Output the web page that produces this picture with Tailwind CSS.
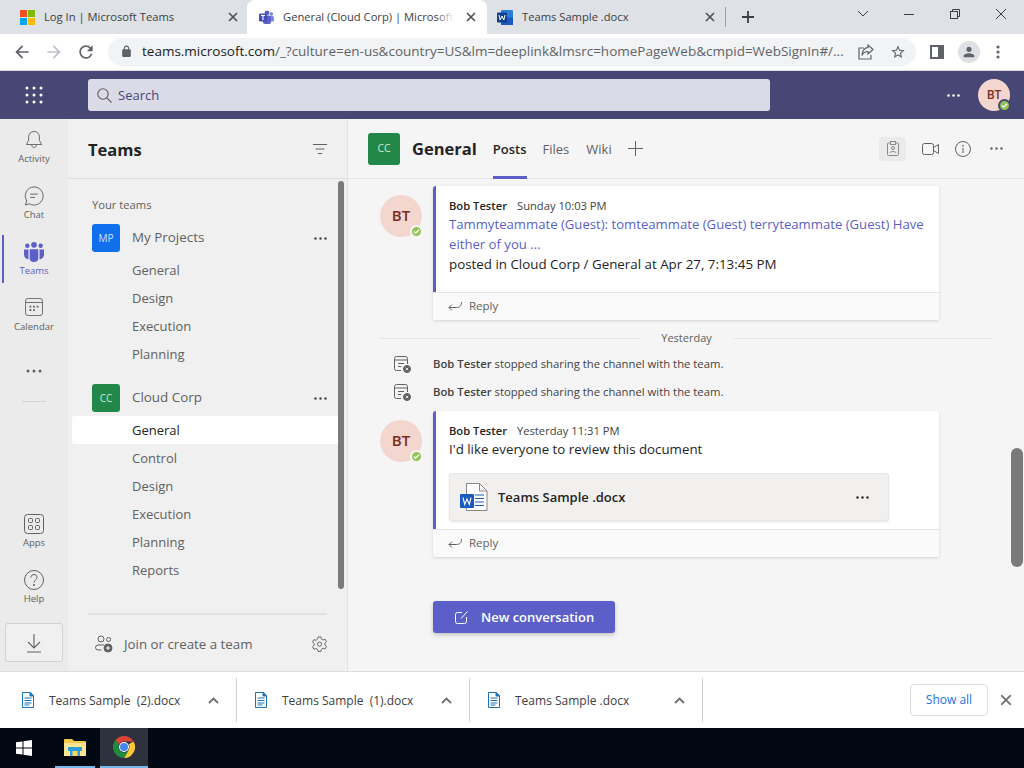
<!DOCTYPE html>
<html lang="en">
<head>
  <meta charset="UTF-8" />
  <title>General (Cloud Corp) | Microsoft Teams</title>
  <script src="https://cdn.jsdelivr.net/npm/@tailwindcss/browser@4"></script>
</head>
<body class="w-[1024px] h-[768px] overflow-hidden flex flex-col font-['Open_Sans',sans-serif] bg-white">

  <!-- Tab strip -->
  <div class="h-[34px] shrink-0 bg-[#dee1e6] flex items-stretch text-[11.2px] text-[#3c4043]">
    <div class="w-[247px] flex items-center pl-[20px] pr-[9px]">
      <svg class="w-[15px] h-[15px] shrink-0" viewBox="0 0 15 15"><rect width="7" height="7" fill="#f25022"/><rect x="8" width="7" height="7" fill="#7fba00"/><rect y="8" width="7" height="7" fill="#00a4ef"/><rect x="8" y="8" width="7" height="7" fill="#ffb900"/></svg>
      <span class="ml-[9px] flex-1 whitespace-nowrap">Log In | Microsoft Teams</span>
      <svg class="w-[10px] h-[10px]" viewBox="0 0 10 10" stroke="#4a4d52" stroke-width="1.6"><path d="M1 1l8 8M9 1l-8 8"/></svg>
    </div>
    <div class="w-[240px] bg-white rounded-t-[8px] flex items-center pl-[12px] pr-[11px]">
      <svg class="w-[15px] h-[15px] shrink-0" viewBox="0 0 15 15"><circle cx="12.3" cy="4" r="1.8" fill="#7b83eb"/><rect x="9" y="6" width="6" height="5.5" rx="1.5" fill="#7b83eb"/><circle cx="8" cy="2.8" r="2.4" fill="#5b5fc7"/><rect x="4" y="5.5" width="8" height="8.5" rx="2" fill="#5b5fc7"/><rect y="3.5" width="8" height="8" rx="1" fill="#464eb8"/><path d="M2 5.5h4M4 5.5v4.5" stroke="#fff" stroke-width="1.1"/></svg>
      <span class="ml-[9px] flex-1 whitespace-nowrap relative">General (Cloud Corp) | Microsoft<span class="absolute right-[12px] top-0 bottom-0 w-[18px] bg-linear-to-r from-transparent to-white"></span></span>
      <svg class="w-[10px] h-[10px] shrink-0" viewBox="0 0 10 10" stroke="#4a4d52" stroke-width="1.6"><path d="M1 1l8 8M9 1l-8 8"/></svg>
    </div>
    <div class="w-[238px] flex items-center pl-[10px] pr-[10px]">
      <svg class="w-[16px] h-[15px] shrink-0" viewBox="0 0 16 15"><rect x="4" y="0" width="12" height="15" rx="1" fill="#2b7cd3"/><rect x="4" y="7.5" width="12" height="7.5" fill="#185abd"/><rect y="2.5" width="10" height="10" rx="1" fill="#103f91"/><path d="M2 5l1.2 5 1.8-4 1.8 4L8 5" fill="none" stroke="#fff" stroke-width="1"/></svg>
      <span class="ml-[9px] flex-1 whitespace-nowrap">Teams Sample .docx</span>
      <svg class="w-[10px] h-[10px]" viewBox="0 0 10 10" stroke="#4a4d52" stroke-width="1.6"><path d="M1 1l8 8M9 1l-8 8"/></svg>
    </div>
    <div class="w-px h-[20px] mt-[7px] bg-[#9aa0a6]"></div>
    <div class="flex items-center pl-[16px] w-[128px]">
      <svg class="w-[12px] h-[12px]" viewBox="0 0 12 12" stroke="#3c4043" stroke-width="1.8"><path d="M6 0v12M0 6h12"/></svg>
    </div>
    <div class="flex-1 flex items-center pb-[6px] pl-[4px]">
      <svg class="w-[10px] h-[6px]" viewBox="0 0 10 6" fill="none" stroke="#3c4043"><path d="M0 0l5 5 5-5"/></svg>
      <svg class="ml-[36px] w-[10px] h-[1px]" viewBox="0 0 10 1" stroke="#3c4043"><path d="M0 .5h10"/></svg>
      <svg class="ml-[36px] w-[10px] h-[10px]" viewBox="0 0 10 10" fill="none" stroke="#3c4043"><rect x=".5" y="2.5" width="7" height="7"/><path d="M2.5 2.5v-2h7v7h-2"/></svg>
      <svg class="ml-[36px] w-[10px] h-[10px]" viewBox="0 0 10 10" stroke="#3c4043"><path d="M0 0l10 10M10 0L0 10"/></svg>
    </div>
  </div>

  <!-- Toolbar -->
  <div class="h-[37px] shrink-0 bg-white flex items-center border-b border-[#dadce0] pb-[1px] text-[#5f6368]">
    <div class="w-[108px] flex items-center pl-[12px] gap-[12px]">
      <svg class="w-[20px] h-[20px]" viewBox="0 0 24 24" fill="#5f6368"><path d="M20 11H7.83l5.59-5.59L12 4l-8 8 8 8 1.41-1.41L7.83 13H20v-2z"/></svg>
      <svg class="w-[20px] h-[20px]" viewBox="0 0 24 24" fill="#bdc1c6"><path d="M12 4l-1.41 1.41L16.17 11H4v2h12.17l-5.58 5.59L12 20l8-8z"/></svg>
      <svg class="w-[20px] h-[20px]" viewBox="0 0 24 24" fill="#5f6368"><path d="M17.65 6.35A7.958 7.958 0 0012 4c-4.42 0-7.99 3.58-7.99 8s3.57 8 7.99 8c3.73 0 6.84-2.55 7.73-6h-2.08A5.99 5.99 0 0112 18c-3.31 0-6-2.69-6-6s2.69-6 6-6c1.66 0 3.14.69 4.22 1.78L13 11h7V4l-2.35 2.35z"/></svg>
    </div>
    <div class="w-[808px] h-[28px] bg-[#f1f3f4] rounded-full flex items-center pl-[12px] pr-[10px]">
      <svg class="w-[13px] h-[13px] shrink-0" viewBox="0 0 24 24" fill="#5f6368"><path d="M18 8h-1V6c0-2.76-2.24-5-5-5S7 3.24 7 6v2H6c-1.1 0-2 .9-2 2v10c0 1.1.9 2 2 2h12c1.1 0 2-.9 2-2V10c0-1.1-.9-2-2-2zM9 6c0-1.66 1.34-3 3-3s3 1.34 3 3v2H9V6z"/></svg>
      <span class="ml-[9px] flex-1 text-[13.5px] whitespace-nowrap text-[#5f6368]"><span class="text-[#202124]">teams.microsoft.com</span>/_?culture=en-us&amp;country=US&amp;lm=deeplink&amp;lmsrc=homePageWeb&amp;cmpid=WebSignIn#/...</span>
      <svg class="w-[16px] h-[16px] ml-[12px] shrink-0" viewBox="0 0 16 16" fill="none" stroke="#5f6368" stroke-width="1.2"><path d="M6 4H1v11h12v-4"/><path d="M10 1l5 4.500L10 10V7.500C7 7.500 5 9 4 11.500 4 7 6.500 3.500 10 3.300z"/></svg>
      <svg class="w-[16px] h-[16px] ml-[16px] shrink-0" viewBox="0 0 24 24" fill="#5f6368"><path d="M22 9.240l-7.190-.62L12 2 9.190 8.630 2 9.240l5.460 4.730L5.820 21 12 17.270 18.180 21l-1.630-7.030L22 9.240zM12 15.400l-3.760 2.270 1-4.280-3.320-2.880 4.380-.38L12 6.100l1.710 4.040 4.380.38-3.320 2.880 1 4.280L12 15.400z"/></svg>
    </div>
    <div class="flex-1 flex items-center pl-[14px]">
      <svg class="w-[14px] h-[14px]" viewBox="0 0 14 14"><path fill-rule="evenodd" d="M0 0h14v14H0zM2 2v10h6V2z" fill="#5f6368"/></svg>
      <div class="ml-[14px] w-[22px] h-[22px] rounded-full bg-[#dee1e6] flex items-center justify-center">
        <svg class="w-[16px] h-[16px]" viewBox="0 0 24 24" fill="#5f6368"><path d="M12 12c2.210 0 4-1.790 4-4s-1.790-4-4-4-4 1.790-4 4 1.790 4 4 4zm0 2c-2.670 0-8 1.340-8 4v2h16v-2c0-2.660-5.330-4-8-4z"/></svg>
      </div>
      <svg class="ml-[16px] w-[4px] h-[14px]" viewBox="0 0 4 14" fill="#5f6368"><circle cx="2" cy="2" r="1.600"/><circle cx="2" cy="7" r="1.600"/><circle cx="2" cy="12" r="1.600"/></svg>
    </div>
  </div>

  <!-- Teams header -->
  <div class="h-[48px] shrink-0 bg-[#464775] flex items-center">
    <div class="w-[88px] pl-[25px]">
      <svg class="w-[18px] h-[18px]" viewBox="0 0 18 18" fill="#fff"><circle cx="2" cy="2" r="1.500"/><circle cx="9" cy="2" r="1.500"/><circle cx="16" cy="2" r="1.500"/><circle cx="2" cy="9" r="1.500"/><circle cx="9" cy="9" r="1.500"/><circle cx="16" cy="9" r="1.500"/><circle cx="2" cy="16" r="1.500"/><circle cx="9" cy="16" r="1.500"/><circle cx="16" cy="16" r="1.500"/></svg>
    </div>
    <div class="w-[682px] h-[32px] bg-[#dbdae7] rounded-[3px] flex items-center pl-[9px]">
      <svg class="w-[15px] h-[15px]" viewBox="0 0 15 15" fill="none" stroke="#605e5c" stroke-width="1.100"><circle cx="6" cy="6" r="5.200"/><path d="M9.800 9.800L14.500 14.500"/></svg>
      <span class="ml-[6px] pt-[1px] text-[13px] text-[#464775]">Search</span>
    </div>
    <svg class="ml-[177px] w-[13px] h-[3px]" viewBox="0 0 13 3" fill="#fff"><circle cx="1.500" cy="1.500" r="1.300"/><circle cx="6.500" cy="1.500" r="1.300"/><circle cx="11.500" cy="1.500" r="1.300"/></svg>
    <div class="relative ml-[18px] w-[32px] h-[32px] rounded-full bg-[#f3d6cd] flex items-center justify-center text-[12px] text-[#7a2d1e] font-semibold">BT
      <span class="absolute right-[-1px] bottom-[-1px] w-[13px] h-[13px] rounded-full bg-[#92c353] border-[2px] border-[#464775] flex items-center justify-center">
        <svg class="w-[7px] h-[7px]" viewBox="0 0 8 8" fill="none" stroke="#fff" stroke-width="1.400"><path d="M1 4l2 2 4-4"/></svg>
      </span>
    </div>
  </div>

  <!-- App body -->
  <div class="h-[552px] shrink-0 flex overflow-hidden">

    <!-- Left rail -->
    <nav class="w-[68px] shrink-0 bg-[#ebebeb] flex flex-col items-center text-[9.5px] text-[#616161] relative">
      <div class="w-full h-[56px] pt-[11px] flex flex-col items-center">
        <svg class="w-[18px] h-[20px]" viewBox="0 0 20 21" fill="none" stroke="#616161"><path d="M10 1c-3.800 0-6 3-6 6v4l-2.500 4.500h17L16 11V7c0-3-2.200-6-6-6z"/><path d="M7.500 16c.2 2 1.200 3 2.500 3s2.300-1 2.500-3"/></svg>
        <span class="mt-[2px]">Activity</span>
      </div>
      <div class="w-full h-[56px] pt-[11px] flex flex-col items-center">
        <svg class="w-[20px] h-[20px]" viewBox="0 0 21 21" fill="none" stroke="#616161"><path d="M10.500 1a9.500 9.500 0 1 1-4.700 17.700L1.500 20l1.300-4.300A9.500 9.500 0 0 1 10.500 1z"/><path d="M6.500 8.500h8M6.500 12h5"/></svg>
        <span class="mt-[2px]">Chat</span>
      </div>
      <div class="w-full h-[56px] pt-[11px] flex flex-col items-center relative text-[#5b5fc7]">
        <span class="absolute left-[2px] top-[4px] w-[2px] h-[48px] bg-[#5b5fc7]"></span>
        <svg class="w-[20px] h-[20px]" viewBox="0 0 21 21" fill="#5b5fc7"><circle cx="10.500" cy="3" r="3"/><circle cx="3.500" cy="4" r="2.300"/><circle cx="17.500" cy="4" r="2.300"/><path d="M0 8h4.700v8.500c0 .7.100 1.200.3 1.700C2.300 18 0 16 0 13zM21 8h-4.700v8.500c0 .7-.1 1.200-.3 1.700 2.700-.2 5-2.200 5-5.200zM6 7.500h9v9.500a4.500 4 0 0 1-9 0z"/></svg>
        <span class="mt-[2px]">Teams</span>
      </div>
      <div class="w-full h-[56px] pt-[11px] flex flex-col items-center">
        <svg class="w-[18px] h-[18px]" viewBox="0 0 20 20" fill="none" stroke="#616161"><rect x=".5" y=".5" width="19" height="19" rx="3"/><path d="M.5 5h19"/><path stroke-width="2" stroke-dasharray="2 2" d="M5 9.500h10M5 13.500h6"/></svg>
        <span class="mt-[4px]">Calendar</span>
      </div>
      <svg class="mt-[26px] w-[16px] h-[4px]" viewBox="0 0 16 4" fill="#616161"><circle cx="2" cy="2" r="1.500"/><circle cx="8" cy="2" r="1.500"/><circle cx="14" cy="2" r="1.500"/></svg>
      <div class="mt-[28px] w-[24px] h-px bg-[#d6d6d6]"></div>
      <div class="mt-[112px] w-full h-[56px] flex flex-col items-center">
        <svg class="w-[20px] h-[20px]" viewBox="0 0 20 20" fill="none" stroke="#616161"><rect x=".5" y=".5" width="19" height="19" rx="3"/><rect x="4.500" y="4.500" width="4" height="4" rx="1"/><rect x="11.500" y="4.500" width="4" height="4" rx="1"/><rect x="4.500" y="11.500" width="4" height="4" rx="1"/><rect x="11.500" y="11.500" width="4" height="4" rx="1"/></svg>
        <span class="mt-[2px]">Apps</span>
      </div>
      <div class="w-full h-[53px] flex flex-col items-center">
        <svg class="w-[20px] h-[20px]" viewBox="0 0 20 20" fill="none" stroke="#616161"><circle cx="10" cy="10" r="9.500"/><path d="M7 7.500c0-2 1.500-3 3-3s3 1 3 3c0 2.500-3 2.500-3 5"/><circle cx="10" cy="15" r=".6" fill="#616161"/></svg>
        <span class="mt-[2px]">Help</span>
      </div>
      <div class="w-[58px] h-[39px] rounded-[3px] border border-[#d1d1d1] bg-[#f0f0f0] flex items-center justify-center">
        <svg class="w-[16px] h-[20px]" viewBox="0 0 16 20" fill="none" stroke="#616161" stroke-width="1.100"><path d="M8 1v13M2 9l6 6 6-6M1 19h14"/></svg>
      </div>
    </nav>

    <!-- Teams list -->
    <aside class="w-[280px] shrink-0 bg-[#f0f0f0] flex flex-col relative border-r border-[#e4e4e4]">
      <div class="h-[60px] shrink-0 border-b border-[#dedede] flex items-center justify-between pl-[20px] pr-[20px]">
        <span class="pt-[4px] text-[16.5px] font-bold text-[#242424]">Teams</span>
        <svg class="w-[14px] h-[10px]" viewBox="0 0 14 10" stroke="#616161"><path d="M0 .5h14M2.500 5h9M5 9.500h4"/></svg>
      </div>
      <span class="absolute left-[270px] top-[62px] w-[6px] h-[408px] rounded-full bg-[#7a7a7a]"></span>
      <div class="flex-1 flex flex-col text-[13px] text-[#616161]">
        <div class="pl-[24px] pt-[18px] h-[45px] text-[11.2px]">Your teams</div>
        <div class="h-[28px] flex items-center pl-[24px] pr-[20px]">
          <span class="w-[28px] h-[28px] rounded-[3px] bg-[#0f6fec] text-[#cfe2fb] text-[10px] flex items-center justify-center">MP</span>
          <span class="ml-[12px] flex-1 pb-[2px] text-[13.4px]">My Projects</span>
          <svg class="w-[13px] h-[3px]" viewBox="0 0 13 3" fill="#424242"><circle cx="1.500" cy="1.500" r="1.200"/><circle cx="6.500" cy="1.500" r="1.200"/><circle cx="11.500" cy="1.500" r="1.200"/></svg>
        </div>
        <div class="mt-[4px] h-[28px] pl-[64px] pt-[2px] flex items-center">General</div>
        <div class="h-[28px] pl-[64px] pt-[2px] flex items-center">Design</div>
        <div class="h-[28px] pl-[64px] pt-[2px] flex items-center">Execution</div>
        <div class="h-[28px] pl-[64px] pt-[2px] flex items-center">Planning</div>
        <div class="mt-[16px] h-[28px] flex items-center pl-[24px] pr-[20px]">
          <span class="w-[28px] h-[28px] rounded-[3px] bg-[#22884a] text-[#cfe8d8] text-[10px] flex items-center justify-center">CC</span>
          <span class="ml-[12px] flex-1 pb-[2px] text-[13.4px]">Cloud Corp</span>
          <svg class="w-[13px] h-[3px]" viewBox="0 0 13 3" fill="#424242"><circle cx="1.500" cy="1.500" r="1.200"/><circle cx="6.500" cy="1.500" r="1.200"/><circle cx="11.500" cy="1.500" r="1.200"/></svg>
        </div>
        <div class="mt-[4px] ml-[4px] mr-[4px] h-[28px] pl-[60px] pt-[2px] flex items-center bg-white rounded-l-[3px] text-[#242424]">General</div>
        <div class="h-[28px] pl-[64px] pt-[2px] flex items-center">Control</div>
        <div class="h-[28px] pl-[64px] pt-[2px] flex items-center">Design</div>
        <div class="h-[28px] pl-[64px] pt-[2px] flex items-center">Execution</div>
        <div class="h-[28px] pl-[64px] pt-[2px] flex items-center">Planning</div>
        <div class="h-[28px] pl-[64px] pt-[2px] flex items-center">Reports</div>
      </div>
      <div class="mx-[20px] h-[2px] bg-[#e0e0e0]"></div>
      <div class="h-[56px] shrink-0 flex items-center pl-[27px] pr-[19px] pt-[2px] text-[13.3px] text-[#616161]">
        <svg class="w-[18px] h-[18px]" viewBox="0 0 18 18" fill="none" stroke="#616161"><circle cx="6" cy="4" r="3"/><circle cx="13.500" cy="4.500" r="2"/><path d="M6.500 15H3a2 2 0 0 1 0-5h6"/><circle cx="13" cy="13" r="4" fill="#616161"/><path d="M13 11v4M11 13h4" stroke="#fff"/></svg>
        <span class="ml-[11px] flex-1 pt-[2px]">Join or create a team</span>
        <svg class="w-[17px] h-[18px]" viewBox="0 0 24 24" fill="none" stroke="#616161" stroke-width="1.300"><path d="M10 2h4l.6 3 2.400 1.300 2.900-1 2 3.500-2.300 2 0 2.600 2.300 2-2 3.500-2.900-1L14.600 19.700 14 22.500h-4l-.6-2.800L7 18.400l-2.900 1-2-3.500 2.300-2v-2.600l-2.300-2 2-3.500 2.900 1L9.400 5z"/><circle cx="12" cy="12.200" r="3"/></svg>
      </div>
    </aside>

    <!-- Channel -->
    <main class="flex-1 bg-[#f5f5f5] flex flex-col relative">
      <header class="h-[60px] shrink-0 border-b border-[#e4e4e4] flex items-center pl-[20px] pr-[21px]">
        <span class="w-[32px] h-[32px] rounded-[3px] bg-[#22884a] text-[#cfe8d8] text-[10.5px] flex items-center justify-center">CC</span>
        <span class="ml-[12px] pt-[2px] text-[16.5px] font-bold text-[#242424]">General</span>
        <span class="ml-[16px] h-full pt-[3px] relative flex items-center text-[13px] font-semibold text-[#242424]">Posts<span class="absolute left-0 right-0 bottom-[-1px] h-[3px] bg-[#5b5fc7]"></span></span>
        <span class="ml-[16px] pt-[3px] text-[13px] text-[#616161]">Files</span>
        <span class="ml-[17px] pt-[3px] text-[13px] text-[#616161]">Wiki</span>
        <svg class="ml-[16px] w-[15px] h-[15px]" viewBox="0 0 15 15" stroke="#616161"><path d="M7.500 0v15M0 7.500h15"/></svg>
        <div class="flex-1"></div>
        <span class="w-[27px] h-[24px] rounded-[3px] bg-[#ebebeb] flex items-center justify-center">
          <svg class="w-[12px] h-[15px]" viewBox="0 0 12 15" fill="none" stroke="#8a8a8a"><rect x=".5" y="2" width="11" height="12.500" rx="1"/><rect x="3.500" y=".5" width="5" height="3" fill="#ebebeb"/><circle cx="6" cy="7" r="1.500"/><path d="M3 12c0-2 6-2 6 0"/></svg>
        </span>
        <svg class="ml-[16px] w-[17px] h-[12px]" viewBox="0 0 17 12" fill="none" stroke="#616161"><rect x=".5" y=".5" width="11" height="11" rx="2"/><path d="M11.500 4.500l5-3v9l-5-3"/></svg>
        <svg class="ml-[16px] w-[16px] h-[16px]" viewBox="0 0 16 16" fill="none" stroke="#616161"><circle cx="8" cy="8" r="7.500"/><path d="M8 7v5"/><circle cx="8" cy="4.800" r=".5"/></svg>
        <svg class="ml-[19px] w-[13px] h-[3px]" viewBox="0 0 13 3" fill="#616161"><circle cx="1.500" cy="1.500" r="1.200"/><circle cx="6.500" cy="1.500" r="1.200"/><circle cx="11.500" cy="1.500" r="1.200"/></svg>
      </header>

      <span class="absolute right-[1px] top-[329px] w-[12px] h-[119px] rounded-full bg-[#7a7a7a]"></span>

      <div class="flex-1 pt-[7px] pl-[32px] flex flex-col">
        <!-- First post -->
        <div class="flex items-start">
          <div class="relative mt-[9px] w-[42px] h-[42px] pb-[2px] rounded-full bg-[#f3d6cd] flex items-center justify-center text-[15px] font-semibold text-[#7a2d1e]">BT
            <span class="absolute right-[-1px] bottom-[-1px] w-[13px] h-[13px] rounded-full bg-[#92c353] border-[2px] border-[#f5f5f5] flex items-center justify-center">
              <svg class="w-[7px] h-[7px]" viewBox="0 0 8 8" fill="none" stroke="#fff" stroke-width="1.400"><path d="M1 4l2 2 4-4"/></svg>
            </span>
          </div>
          <div class="ml-[11px] w-[506px] rounded-[3px] overflow-hidden bg-white shadow-[0_1px_3px_rgba(0,0,0,0.14)]">
            <div class="h-[106px] border-l-[3px] border-[#5b5fc7] pl-[13px] pr-[12px] pt-[11px]">
              <div class="text-[11.2px] leading-[18px] text-[#424242] whitespace-nowrap"><span class="font-semibold text-[#242424]">Bob Tester</span><span class="ml-[10px]">Sunday 10:03 PM</span></div>
              <div class="text-[13.15px] leading-[20px] text-[#5b5fc7] mt-[-1px]">Tammyteammate (Guest): tomteammate (Guest) terryteammate (Guest) Have either of you ...</div>
              <div class="text-[13.35px] leading-[20px] text-[#242424]">posted in Cloud Corp / General at Apr 27, 7:13:45 PM</div>
            </div>
            <div class="h-[28px] border-t border-[#e6e6e6] bg-[#fafafa] flex items-center pl-[15px] pb-[2px] text-[11.5px] text-[#616161]">
              <svg class="w-[14px] h-[10px]" viewBox="0 0 14 10" fill="none" stroke="#616161"><path d="M13.500 1c0 4-2 5.500-5 5.500H1M4 3.500L1 6.500 4 9.500"/></svg>
              <span class="ml-[7px]">Reply</span>
            </div>
          </div>
        </div>

        <div class="mt-[9px] h-[18px] w-[612px] flex items-center text-[11px] text-[#616161]">
          <div class="w-[259px] h-px bg-[#e4e4e4]"></div>
          <span class="mx-auto">Yesterday</span>
          <div class="w-[258px] h-px bg-[#e4e4e4]"></div>
        </div>

        <div class="mt-[3px] h-[28px] flex items-center pl-[14px] text-[11.3px] text-[#424242]">
          <svg class="w-[17px] h-[17px]" viewBox="0 0 17 17" fill="none" stroke="#616161"><path d="M7 14.500H2.500a2 2 0 0 1-2-2v-10a2 2 0 0 1 2-2h9a2 2 0 0 1 2 2V8"/><path d="M.5 4h13M4 7.500h6M4 10.500h3"/><circle cx="13" cy="13" r="3.500" fill="#616161"/><path d="M11.700 11.700l2.600 2.600M14.300 11.700l-2.600 2.600" stroke="#fff" stroke-width=".8"/></svg>
          <span class="ml-[22px] whitespace-nowrap"><span class="font-semibold">Bob Tester</span> stopped sharing the channel with the team.</span>
        </div>
        <div class="h-[28px] flex items-center pl-[14px] text-[11.3px] text-[#424242]">
          <svg class="w-[17px] h-[17px]" viewBox="0 0 17 17" fill="none" stroke="#616161"><path d="M7 14.500H2.500a2 2 0 0 1-2-2v-10a2 2 0 0 1 2-2h9a2 2 0 0 1 2 2V8"/><path d="M.5 4h13M4 7.500h6M4 10.500h3"/><circle cx="13" cy="13" r="3.500" fill="#616161"/><path d="M11.700 11.700l2.600 2.600M14.300 11.700l-2.600 2.600" stroke="#fff" stroke-width=".8"/></svg>
          <span class="ml-[22px] whitespace-nowrap"><span class="font-semibold">Bob Tester</span> stopped sharing the channel with the team.</span>
        </div>

        <!-- Second post -->
        <div class="mt-[5px] flex items-start">
          <div class="relative mt-[9px] w-[42px] h-[42px] pb-[2px] rounded-full bg-[#f3d6cd] flex items-center justify-center text-[15px] font-semibold text-[#7a2d1e]">BT
            <span class="absolute right-[-1px] bottom-[-1px] w-[13px] h-[13px] rounded-full bg-[#92c353] border-[2px] border-[#f5f5f5] flex items-center justify-center">
              <svg class="w-[7px] h-[7px]" viewBox="0 0 8 8" fill="none" stroke="#fff" stroke-width="1.400"><path d="M1 4l2 2 4-4"/></svg>
            </span>
          </div>
          <div class="ml-[11px] w-[506px] rounded-[3px] overflow-hidden bg-white shadow-[0_1px_3px_rgba(0,0,0,0.14)]">
            <div class="h-[118px] border-l-[3px] border-[#5b5fc7] pl-[13px] pr-[50px] pt-[11px]">
              <div class="text-[11.2px] leading-[18px] text-[#424242] whitespace-nowrap"><span class="font-semibold text-[#242424]">Bob Tester</span><span class="ml-[10px]">Yesterday 11:31 PM</span></div>
              <div class="text-[13.3px] leading-[20px] text-[#242424] mt-[-1px]">I'd like everyone to review this document</div>
              <div class="mt-[14px] h-[48px] rounded-[3px] border border-[#e6e6e6] bg-[#f1f0ef] shadow-[0_1px_2px_rgba(0,0,0,0.1)] flex items-center pl-[10px] pr-[19px]">
                <svg class="w-[28px] h-[28px] shrink-0" viewBox="0 0 28 28"><path d="M6.500.5h13l7.500 7.500v19.500H6.500z" fill="#fff" stroke="#8a8886"/><path d="M19.500.5V8H27" fill="none" stroke="#8a8886"/><path d="M15 12h9M15 15.500h9M15 19h9M15 22.500h9" stroke="#185abd"/><rect y="11" width="14" height="14" rx="1" fill="#185abd"/><path d="M3 14.500l1.700 7 2.300-5.500 2.300 5.500 1.700-7" fill="none" stroke="#fff" stroke-width="1.100"/></svg>
                <span class="ml-[10px] pt-[2px] flex-1 text-[13px] font-semibold text-[#242424]">Teams Sample .docx</span>
                <svg class="w-[13px] h-[3px]" viewBox="0 0 13 3" fill="#242424"><circle cx="1.500" cy="1.500" r="1.200"/><circle cx="6.500" cy="1.500" r="1.200"/><circle cx="11.500" cy="1.500" r="1.200"/></svg>
              </div>
            </div>
            <div class="h-[28px] border-t border-[#e6e6e6] bg-[#fafafa] flex items-center pl-[15px] pb-[2px] text-[11.5px] text-[#616161]">
              <svg class="w-[14px] h-[10px]" viewBox="0 0 14 10" fill="none" stroke="#616161"><path d="M13.500 1c0 4-2 5.500-5 5.500H1M4 3.500L1 6.500 4 9.500"/></svg>
              <span class="ml-[7px]">Reply</span>
            </div>
          </div>
        </div>

        <button class="mt-[44px] ml-[53px] w-[182px] h-[32px] rounded-[3px] bg-[#5b5fc7] shadow-[0_2px_4px_rgba(0,0,0,0.2)] flex items-center pl-[22px] text-[13px] font-semibold text-white">
          <svg class="w-[13px] h-[13px]" viewBox="0 0 13 13" fill="none" stroke="#fff"><path d="M7 1.500H2.500a2 2 0 0 0-2 2v7a2 2 0 0 0 2 2h7a2 2 0 0 0 2-2V6"/><path d="M6 7.500L12.500.5"/></svg>
          <span class="ml-[13px] pt-[1px]">New conversation</span>
        </button>
      </div>
    </main>
  </div>

  <!-- Downloads bar -->
  <div class="h-[57px] shrink-0 bg-white border-t border-[#dadce0] flex items-center text-[12px] text-[#3c4043]">
    <div class="w-[236px] flex items-center pl-[22px] pr-[17px]">
      <svg class="w-[12px] h-[16px]" viewBox="0 0 12 16" fill="none" stroke="#1a73b8"><path d="M.5.500h8l3 3v12H.5z"/><path d="M2.500 6h7M2.500 8.500h7M2.500 11h7M2.500 13h5"/><path d="M8 .5v3.500h3.500" fill="#1a73b8"/></svg>
      <span class="ml-[15px] pt-[1px] flex-1 whitespace-nowrap">Teams Sample &nbsp;(2).docx</span>
      <svg class="w-[11px] h-[7px]" viewBox="0 0 11 7" fill="none" stroke="#6b6e72" stroke-width="1.800"><path d="M1 6l4.500-4.500L10 6"/></svg>
    </div>
    <div class="w-px h-[44px] bg-[#d0d0d0]"></div>
    <div class="w-[232px] flex items-center pl-[18px] pr-[17px]">
      <svg class="w-[12px] h-[16px]" viewBox="0 0 12 16" fill="none" stroke="#1a73b8"><path d="M.5.500h8l3 3v12H.5z"/><path d="M2.500 6h7M2.500 8.500h7M2.500 11h7M2.500 13h5"/><path d="M8 .5v3.500h3.500" fill="#1a73b8"/></svg>
      <span class="ml-[15px] pt-[1px] flex-1 whitespace-nowrap">Teams Sample &nbsp;(1).docx</span>
      <svg class="w-[11px] h-[7px]" viewBox="0 0 11 7" fill="none" stroke="#6b6e72" stroke-width="1.800"><path d="M1 6l4.500-4.500L10 6"/></svg>
    </div>
    <div class="w-px h-[44px] bg-[#d0d0d0]"></div>
    <div class="w-[232px] flex items-center pl-[18px] pr-[17px]">
      <svg class="w-[12px] h-[16px]" viewBox="0 0 12 16" fill="none" stroke="#1a73b8"><path d="M.5.500h8l3 3v12H.5z"/><path d="M2.500 6h7M2.500 8.500h7M2.500 11h7M2.500 13h5"/><path d="M8 .5v3.500h3.500" fill="#1a73b8"/></svg>
      <span class="ml-[15px] pt-[1px] flex-1 whitespace-nowrap">Teams Sample .docx</span>
      <svg class="w-[11px] h-[7px]" viewBox="0 0 11 7" fill="none" stroke="#6b6e72" stroke-width="1.800"><path d="M1 6l4.500-4.500L10 6"/></svg>
    </div>
    <div class="w-px h-[44px] bg-[#d0d0d0]"></div>
    <div class="ml-[207px] w-[78px] h-[32px] rounded-[4px] border border-[#dadce0] flex items-center justify-center text-[#1a73e8]">Show all</div>
    <svg class="ml-[13px] w-[10px] h-[10px]" viewBox="0 0 10 10" stroke="#6b6e72" stroke-width="1.800"><path d="M0 0l10 10M10 0L0 10"/></svg>
  </div>

  <!-- Windows taskbar -->
  <div class="h-[40px] shrink-0 bg-[#010812] flex items-stretch">
    <div class="w-[55px] pl-[16px] flex items-center">
      <svg class="w-[16px] h-[16px]" viewBox="0 0 16 16" fill="#fff"><path d="M0 2.300L6.500 1.400V7.500H0zM7.500 1.300L16 0V7.500H7.500zM0 8.500H6.500V14.600L0 13.700zM7.500 8.500H16V16L7.500 14.700z"/></svg>
    </div>
    <div class="w-[40px] border-b-[2px] border-[#76b9ed] flex items-center justify-center">
      <svg class="w-[22px] h-[18px]" viewBox="0 0 22 18"><path d="M0 2a1 1 0 0 1 1-1h7l2 2h11a1 1 0 0 1 1 1v13H0z" fill="#f5c84b"/><rect y="5" width="22" height="13" fill="#ffe592"/><rect x="4" y="9" width="14" height="4" fill="#2a9fdc"/><rect x="6" y="13" width="10" height="5" fill="#2a9fdc"/><rect x="8.500" y="13" width="5" height="5" fill="#ffd75e"/></svg>
    </div>
    <div class="ml-[5px] w-[48px] bg-[#2d323d] border-b-[2px] border-[#76b9ed] flex items-center justify-center">
      <svg class="w-[22px] h-[22px]" viewBox="0 0 22 22"><path d="M11 0a11 11 0 0 1 9.530 5.500H11a5.500 5.500 0 0 0-5.200 3.700L2.700 3.800A11 11 0 0 1 11 0z" fill="#db4437"/><path d="M20.530 5.500A11 11 0 0 1 11 22l4.760-8.250A5.500 5.500 0 0 0 15.760 8.250z" fill="#fcc934"/><path d="M2.700 3.800A11 11 0 0 0 11 22l4.760-8.250a5.500 5.500 0 0 1-9.960-4.550z" fill="#1e8e3e"/><circle cx="11" cy="11" r="5" fill="#fff"/><circle cx="11" cy="11" r="4" fill="#4285f4"/></svg>
    </div>
  </div>
</body>
</html>
